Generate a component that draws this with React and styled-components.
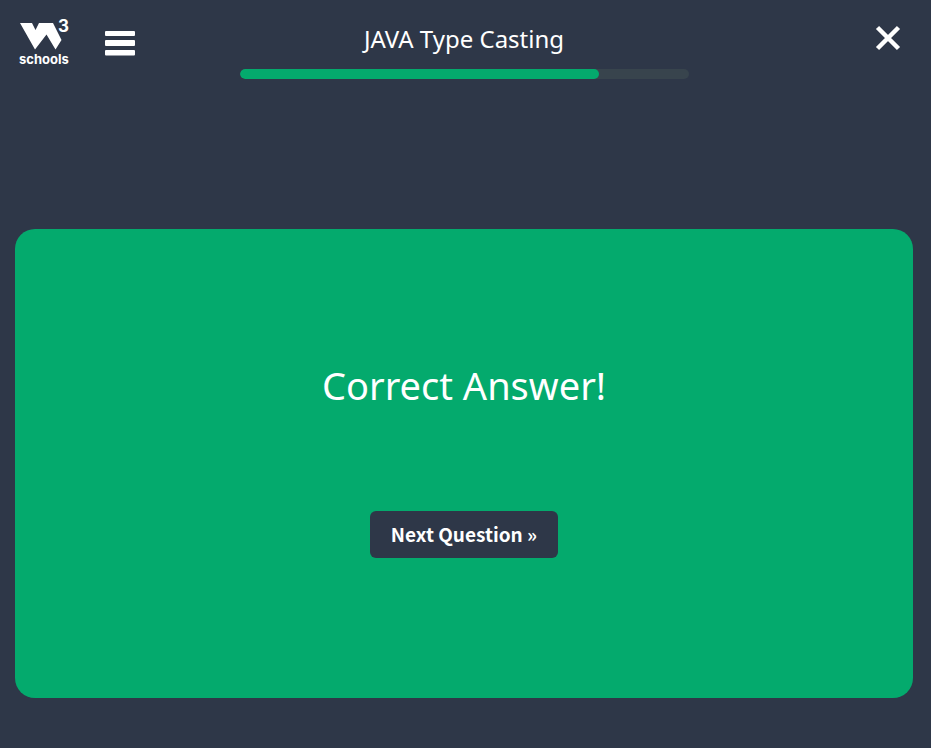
import React from "react";
import styled, { createGlobalStyle } from "styled-components";

const GlobalStyle = createGlobalStyle`
  *, *::before, *::after { box-sizing: border-box; }
  body {
    margin: 0;
    background: #2e3748;
    color: #fff;
    font-family: "Noto Sans", "Open Sans", sans-serif;
  }
`;

const Page = styled.div`
  display: flex;
  flex-direction: column;
  min-height: 100vh;
  padding: 0 18px 50px 15px;
`;

const Header = styled.header`
  display: grid;
  grid-template-columns: 1fr 2fr 1fr;
  align-items: start;
`;

const Tools = styled.div`
  display: flex;
  align-items: flex-start;
  gap: 33px;
  padding: 10px 0 0 3px;
`;

const LogoLink = styled.a`
  display: block;
  color: #fff;
  text-decoration: none;

  svg { display: block; }
`;

const IconButton = styled.button`
  display: block;
  padding: 0;
  border: 0;
  background: none;
  color: #fff;
  cursor: pointer;

  svg { display: block; }
`;

const MenuButton = styled(IconButton)`
  margin-top: 20px;
`;

const CloseButton = styled(IconButton)`
  justify-self: end;
  margin: 25px 12px 0 0;
`;

const Heading = styled.div`
  padding-top: 20px;
`;

const Title = styled.h1`
  margin: 0;
  font-size: 24px;
  font-weight: 400;
  line-height: 38px;
  text-align: center;
`;

const Track = styled.div`
  height: 10px;
  margin-top: 11px;
  overflow: hidden;
  border-radius: 5px;
  background: #38444d;
`;

const Fill = styled.div`
  height: 100%;
  border-radius: 5px;
  background: #04aa6d;
`;

const Card = styled.main`
  display: flex;
  flex: 1;
  flex-direction: column;
  align-items: center;
  justify-content: center;
  gap: 96px;
  margin-top: 150px;
  padding: 0 16px 14px;
  border-radius: 20px;
  background: #04aa6d;
`;

const Message = styled.h2`
  margin: 0;
  font-size: 38px;
  font-weight: 400;
  line-height: 60px;
  text-align: center;
`;

const NextButton = styled.button`
  padding: 0 21px 2px;
  border: 0;
  border-radius: 6px;
  background: #2e3748;
  color: #fff;
  font-family: "Noto Sans CJK SC", sans-serif;
  font-size: 19px;
  font-weight: 700;
  line-height: 45px;
  cursor: pointer;
`;

const LogoText = styled.text`
  font-family: "Inter", sans-serif;
  font-size: ${(p) => p.$size}px;
  font-weight: 700;
`;

function Logo() {
  return (
    <svg width="54" height="60" viewBox="18 10 54 60" fill="currentColor">
      <path d="M20 23H32L35.500 30L39 23H53L61.500 40L55.500 49.500L46.500 34.500L35 49.500Z" />
      <LogoText x="58" y="32" $size={17}>3</LogoText>
      <LogoText x="19" y="64" $size={13}>schools</LogoText>
    </svg>
  );
}

function MenuIcon() {
  return (
    <svg width="30" height="26" viewBox="0 0 30 26" fill="currentColor" aria-hidden="true">
      <rect y="1" width="30" height="5" rx="1" />
      <rect y="10" width="30" height="6" rx="1" />
      <rect y="20" width="30" height="5.500" rx="1" />
    </svg>
  );
}

function CloseIcon() {
  return (
    <svg width="26" height="26" viewBox="0 0 26 26" fill="none" stroke="currentColor" strokeWidth="4.500" aria-hidden="true">
      <path d="M2.500 2.500L23.500 23.500M23.500 2.500L2.500 23.500" />
    </svg>
  );
}

export default function App() {
  const progress = 80;
  return (
    <>
      <GlobalStyle />
      <Page>
        <Header>
          <Tools>
            <LogoLink href="#" aria-label="W3Schools home"><Logo /></LogoLink>
            <MenuButton type="button" aria-label="Menu"><MenuIcon /></MenuButton>
          </Tools>
          <Heading>
            <Title>JAVA Type Casting</Title>
            <Track role="progressbar" aria-label="Quiz progress" aria-valuenow={progress} aria-valuemin={0} aria-valuemax={100}>
              <Fill style={{ width: `${progress}%` }} />
            </Track>
          </Heading>
          <CloseButton type="button" aria-label="Close"><CloseIcon /></CloseButton>
        </Header>
        <Card>
          <Message>Correct Answer!</Message>
          <NextButton type="button">Next Question »</NextButton>
        </Card>
      </Page>
    </>
  );
}
